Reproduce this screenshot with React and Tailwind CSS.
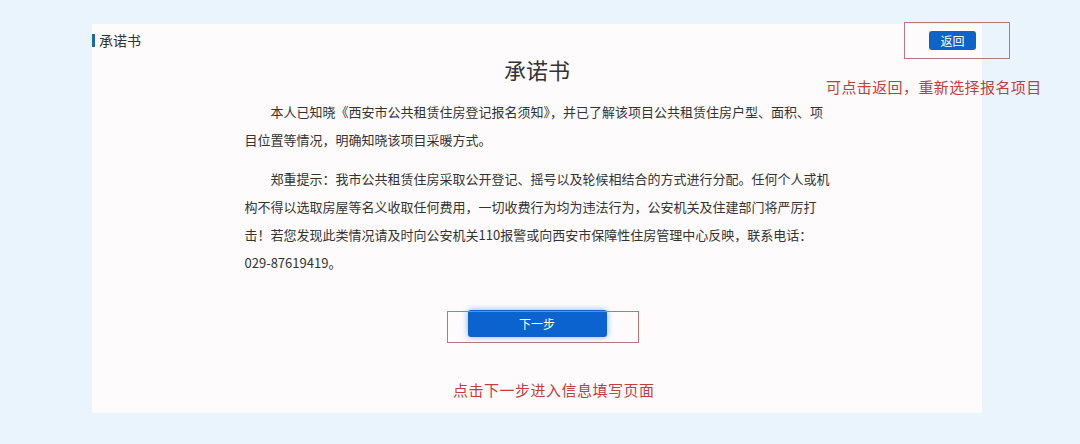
const FONT = '"Noto Sans CJK SC", "Noto Sans", sans-serif'

export default function App() {
  return (
    <div
      className="relative h-[444px] w-[1080px] overflow-hidden bg-[#eaf4fd] pt-[24px]"
      style={{ fontFamily: FONT }}
    >
      {/* ── card ── */}
      <div className="ml-[92px] flex h-[389px] w-[890px] flex-col bg-[#fefbfc]">
        <div className="mt-[7px] flex h-[19px] items-center justify-between pr-[6px]">
          <div className="flex items-center">
            <span className="h-[13px] w-[3px] bg-[#1b6aa8]" />
            <span className="ml-[4px] text-[14px] leading-[19px] text-[#333]">承诺书</span>
          </div>
          <button className="h-[19px] w-[47px] rounded-[3px] bg-[#0e63c9] text-[12px] leading-[19px] text-white">
            返回
          </button>
        </div>

        <h1 className="mt-[4px] text-center text-[22px] leading-[30px] text-[#333]">承诺书</h1>

        <div className="mx-auto mt-[14px] w-[585px] text-[13px] leading-[28px] text-[#333]">
          <p className="indent-[2em]">
            本人已知晓《西安市公共租赁住房登记报名须知》，并已了解该项目公共租赁住房户型、面积、项目位置等情况，明确知晓该项目采暖方式。
          </p>
          <p className="mt-[11px] indent-[2em]">
            郑重提示：我市公共租赁住房采取公开登记、摇号以及轮候相结合的方式进行分配。任何个人或机构不得以选取房屋等名义收取任何费用，一切收费行为均为违法行为，公安机关及住建部门将严厉打击！若您发现此类情况请及时向公安机关110报警或向西安市保障性住房管理中心反映，联系电话：029-87619419。
          </p>
        </div>

        <button className="mx-auto mt-[33px] h-[27px] w-[139px] rounded-[3px] bg-[#0b63cf] text-[12px] text-white shadow-[0_0_6px_rgba(70,150,255,0.7)]">
          下一步
        </button>
      </div>

      {/* ── annotations ── */}
      <div className="absolute left-[904px] top-[22px] h-[37px] w-[106px] border border-[#b9767a]" />
      <div className="absolute left-[826px] top-[77px] text-[15px] leading-[20px] tracking-[0.4px] text-[#c43c3c]">
        可点击返回，重新选择报名项目
      </div>
      <div className="absolute left-[447px] top-[311px] h-[32px] w-[192px] border border-[#b9767a]" />
      <div className="absolute left-[453px] top-[380px] text-[15px] leading-[20px] tracking-[0.5px] text-[#c43c3c]">
        点击下一步进入信息填写页面
      </div>
    </div>
  )
}
